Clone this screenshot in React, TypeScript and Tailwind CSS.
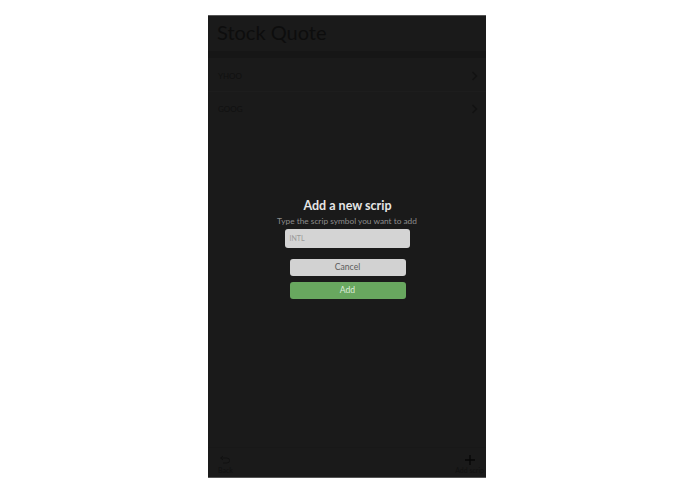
export default function App() {
  const font = "font-['Lato',sans-serif]";
  return (
    <div className={`min-h-[494px] bg-white flex justify-center pt-[15px] ${font}`}>
      <div className="relative w-[278px] h-[463px] mr-[1px] bg-[#1a1a1a] flex flex-col border-t border-b border-[#555] overflow-hidden">
        <div className="h-[35px] pl-[9px] pb-[3px] flex items-center text-[20px] text-[#0d0d0d]">Stock Quote</div>
        <div className="h-[7px] bg-[#161616]" />
        <div className="h-[32px] mt-[2px] px-[10px] flex items-center justify-between text-[8px] text-[#101010] border-b border-[#1d1d1d]">
          <span>YHOO</span>
          <svg className="-mr-[2px]" width="7" height="10" viewBox="0 0 7 10" fill="none" stroke="#121212" strokeWidth="1.5"><path d="M1.5 1l4 4-4 4" /></svg>
        </div>
        <div className="h-[33px] px-[10px] flex items-center justify-between text-[8px] text-[#101010]">
          <span>GOOG</span>
          <svg className="-mr-[2px]" width="7" height="10" viewBox="0 0 7 10" fill="none" stroke="#121212" strokeWidth="1.5"><path d="M1.5 1l4 4-4 4" /></svg>
        </div>
        <div className="flex-1" />
        <div className="h-[30px] px-[10px] flex items-start justify-between border-t border-[#181818]">
          <div className="flex flex-col items-center pt-[7px]">
            <svg width="12" height="10" viewBox="0 0 12 10" fill="none" stroke="#111111" strokeWidth="1"><path d="M4 1L1.5 3 4 5M2 3h6a2.5 2.5 0 010 5H4" /></svg>
            <span className="text-[7px] leading-[9px] mt-[1px] text-[#111111]">Back</span>
          </div>
          <div className="flex flex-col items-center pt-[6px] -mr-[8px]">
            <svg width="12" height="12" viewBox="0 0 12 12" fill="none" stroke="#060606" strokeWidth="1.3"><path d="M6 1v10M1 6h10" /></svg>
            <span className="text-[7px] leading-[9px] text-[#111111]">Add scrip</span>
          </div>
        </div>
        <div className="absolute left-0 right-0 top-[182px] flex flex-col items-center">
          <div className="text-[12.5px] leading-[16px] font-bold text-[#e6e6e6] ml-[1px]">Add a new scrip</div>
          <div className="text-[8.3px] leading-[11px] mt-[2px] text-[#8c8c8c]">Type the scrip symbol you want to add</div>
          <div className="w-[125px] h-[19px] mt-[2px] rounded-[3px] bg-[#d4d4d4] flex items-center pl-[5px] text-[7px] text-[#9a9a9a]">INTL</div>
          <div className="w-[116px] h-[17px] mt-[11px] ml-[1px] rounded-[3px] bg-[#d2d2d2] flex items-center justify-center text-[8.6px] text-[#5c5c5c]">Cancel</div>
          <div className="w-[116px] h-[17px] mt-[6px] ml-[1px] rounded-[3px] bg-[#68a75f] flex items-center justify-center text-[8.6px] text-[#dcebd9]">Add</div>
        </div>
      </div>
    </div>
  );
}
